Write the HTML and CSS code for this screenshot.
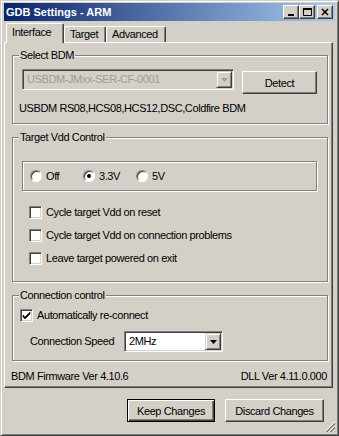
FILE: index.html
```html
<!DOCTYPE html>
<html lang="en">
<head>
    <meta charset="UTF-8">
    <title>GDB Settings - ARM</title>
    <link rel="stylesheet" href="styles.css">
</head>
<body>

    <div class="window">
        <!-- Title bar -->
        <div class="titlebar">
            <span class="title">GDB Settings - ARM</span>
            <div class="caption-buttons">
                <span class="cap-btn">
                    <svg width="14" height="12" viewBox="0 0 14 12"><rect x="4" y="8" width="6" height="2" fill="#000"/></svg>
                </span>
                <span class="cap-btn">
                    <svg width="14" height="12" viewBox="0 0 14 12"><path d="M3.5 2.5h8v7h-8z" fill="none" stroke="#000"/><rect x="3" y="2" width="9" height="2" fill="#000"/></svg>
                </span>
                <span class="cap-btn close">
                    <svg width="14" height="12" viewBox="0 0 14 12"><path d="M4 3l6 6M10 3l-6 6" stroke="#000" stroke-width="1.6"/></svg>
                </span>
            </div>
        </div>

        <!-- Tabs -->
        <div class="tabs">
            <span class="tab active tab-interface">Interface</span>
            <span class="tab tab-target">Target</span>
            <span class="tab tab-advanced">Advanced</span>
        </div>

        <div class="panel">
            <!-- Select BDM -->
            <fieldset class="group">
                <legend>Select BDM</legend>
                <div class="bdm-row">
                    <div class="combo disabled bdm-combo">
                        <span class="combo-text">USBDM-JMxx-SER-CF-0001</span>
                        <span class="combo-arrow">
                            <svg width="7" height="4" viewBox="0 0 7 4"><path d="M0 0h7L3.5 4z" fill="#a0a0a0"/></svg>
                        </span>
                    </div>
                    <button class="btn detect">Detect</button>
                </div>
                <p class="info">USBDM RS08,HCS08,HCS12,DSC,Coldfire BDM</p>
            </fieldset>

            <!-- Target Vdd -->
            <fieldset class="group">
                <legend>Target Vdd Control</legend>
                <div class="radio-box">
                    <label class="radio"><span class="radio-dot"></span>Off</label>
                    <label class="radio"><span class="radio-dot checked"></span>3.3V</label>
                    <label class="radio"><span class="radio-dot"></span>5V</label>
                </div>
                <div class="check-list">
                    <label class="check"><span class="check-box"></span>Cycle target Vdd on reset</label>
                    <label class="check"><span class="check-box"></span>Cycle target Vdd on connection problems</label>
                    <label class="check"><span class="check-box"></span>Leave target powered on exit</label>
                </div>
            </fieldset>

            <!-- Connection control -->
            <fieldset class="group">
                <legend>Connection control</legend>
                <label class="check auto">
                    <span class="check-box">
                        <svg width="9" height="9" viewBox="0 0 9 9"><path d="M1 4l2 2 5-5v2l-5 5-2-2z" fill="#000" stroke="#000" stroke-width="0.6"/></svg>
                    </span>
                    Automatically re-connect
                </label>
                <div class="speed-row">
                    <span class="speed-label">Connection Speed</span>
                    <div class="combo speed-combo">
                        <span class="combo-text">2MHz</span>
                        <span class="combo-arrow">
                            <svg width="7" height="4" viewBox="0 0 7 4"><path d="M0 0h7L3.5 4z" fill="#000"/></svg>
                        </span>
                    </div>
                </div>
            </fieldset>

            <div class="versions">
                <span>BDM Firmware Ver 4.10.6</span>
                <span>DLL Ver 4.11.0.000</span>
            </div>
        </div>

        <!-- Dialog buttons -->
        <div class="actions">
            <button class="btn default keep">Keep Changes</button>
            <button class="btn discard">Discard Changes</button>
        </div>

        <svg class="grip" width="12" height="12" viewBox="0 0 12 12">
            <path d="M11 1L1 11M11 5L5 11M11 9L9 11" stroke="#fff" stroke-width="1"/>
            <path d="M11 2L2 11M11 3L3 11M11 6L6 11M11 7L7 11M11 10L10 11" stroke="#808080" stroke-width="1"/>
        </svg>
    </div>

</body>
</html>
```

FILE: styles.css
```css
body {
    margin: 0;
    padding: 0;
    background-color: #d4d0c8;
    font-family: "Liberation Sans", Arial, sans-serif;
    font-size: 11px;
    line-height: 13px;
    letter-spacing: -0.4px;
    color: #000;
}

.window {
    position: relative;
    width: 339px;
    height: 436px;
    box-sizing: border-box;
    padding: 2px 3px 3px 3px;
    background-color: #d4d0c8;
    border: 1px solid;
    border-color: #d4d0c8 #404040 #404040 #d4d0c8;
    box-shadow: inset 1px 1px #fff, inset -1px -1px #808080;
}

/* Title bar */
.titlebar {
    height: 18px;
    display: flex;
    align-items: center;
    justify-content: space-between;
    padding-left: 2px;
    background: linear-gradient(to right, #0a246a, #a6caf0);
    color: #fff;
}

.title {
    font-weight: bold;
    font-size: 11px;
    letter-spacing: 0;
}

.caption-buttons {
    display: flex;
    padding-right: 2px;
}

.cap-btn {
    width: 16px;
    height: 14px;
    box-sizing: border-box;
    display: flex;
    align-items: center;
    justify-content: center;
    background-color: #d4d0c8;
    border: 1px solid;
    border-color: #fff #404040 #404040 #fff;
    box-shadow: inset -1px -1px #808080;
}

.cap-btn.close {
    margin-left: 2px;
}

/* Tabs */
.tabs {
    display: flex;
    align-items: flex-end;
    height: 21px;
    padding-left: 2px;
    position: relative;
    z-index: 1;
}

.tab {
    height: 16px;
    box-sizing: border-box;
    padding: 1px 0 0 5px;
    border: 1px solid;
    border-bottom: none;
    border-color: #fff #404040 #404040 #fff;
    box-shadow: inset -1px 0 #808080;
    border-radius: 2px 2px 0 0;
    background-color: #d4d0c8;
}

.tab.active {
    height: 20px;
    margin-bottom: -1px;
    padding: 2px 0 0 5px;
}

.tab-interface {
    width: 58px;
}

.tab-target {
    width: 42px;
}

.tab-advanced {
    width: 60px;
}

/* Tab panel */
.panel {
    height: 346px;
    box-sizing: border-box;
    margin-right: 2px;
    padding: 6px 0 0 0;
    border: 1px solid;
    border-color: #fff #404040 #404040 #fff;
    box-shadow: inset -1px -1px #808080;
}

/* Group boxes */
.group {
    width: 316px;
    box-sizing: border-box;
    margin: 0 4px 0 7px;
    padding: 7px 6px 8px 6px;
    min-width: 0;
    border: 1px solid #808080;
    box-shadow: inset 1px 1px #fff, 1px 1px #fff;
}

.group + .group {
    margin-top: 7px;
}

.group legend {
    padding: 0 1px;
    margin-left: 0;
    background-color: #d4d0c8;
}

.bdm-row {
    display: flex;
    align-items: flex-start;
    margin-left: 3px;
}

/* Combo boxes */
.combo {
    height: 21px;
    box-sizing: border-box;
    display: flex;
    align-items: center;
    background-color: #fff;
    border: 1px solid;
    border-color: #808080 #fff #fff #808080;
    box-shadow: inset 1px 1px #404040, inset -1px -1px #d4d0c8;
    padding: 2px;
}

.combo.disabled {
    background-color: #d4d0c8;
    color: #a09c94;
}

.combo-text {
    flex: 1;
    padding-left: 2px;
}

.combo-arrow {
    width: 16px;
    height: 17px;
    box-sizing: border-box;
    display: flex;
    align-items: center;
    justify-content: center;
    background-color: #d4d0c8;
    border: 1px solid;
    border-color: #d4d0c8 #404040 #404040 #d4d0c8;
    box-shadow: inset 1px 1px #fff, inset -1px -1px #808080;
    margin-right: -1px;
}

.bdm-combo {
    width: 212px;
}

.speed-combo {
    width: 99px;
}

/* Buttons */
.btn {
    height: 23px;
    box-sizing: border-box;
    padding: 0;
    font-family: inherit;
    font-size: 11px;
    letter-spacing: inherit;
    color: #000;
    background-color: #d4d0c8;
    border: 1px solid;
    border-color: #fff #404040 #404040 #fff;
    box-shadow: inset -1px -1px #808080;
}

.btn.default {
    border: 1px solid #000;
    box-shadow: inset 1px 1px #fff, inset -1px -1px #404040, inset -2px -2px #808080;
}

.detect {
    width: 75px;
    margin-top: 2px;
    margin-left: 8px;
}

.info {
    margin: 8px 0 0 0;
}

/* Radio group */
.radio-box {
    height: 30px;
    width: 295px;
    box-sizing: border-box;
    margin: 10px 0 0 3px;
    padding-left: 7px;
    display: flex;
    align-items: center;
    border: 1px solid #808080;
    box-shadow: inset 1px 1px #fff, 1px 1px #fff;
}

.radio {
    width: 53px;
    display: flex;
    align-items: center;
    gap: 4px;
}

.radio-dot {
    width: 12px;
    height: 12px;
    box-sizing: border-box;
    border-radius: 50%;
    background-color: #fff;
    border: 1px solid;
    border-color: #808080 #fff #fff #808080;
    box-shadow: inset 1px 1px #404040;
    position: relative;
}

.radio-dot.checked::after {
    content: "";
    position: absolute;
    left: 3px;
    top: 3px;
    width: 4px;
    height: 4px;
    border-radius: 50%;
    background-color: #000;
}

/* Checkboxes */
.check-list {
    display: flex;
    flex-direction: column;
    gap: 10px;
    margin: 15px 0 8px 10px;
}

.check {
    display: flex;
    align-items: center;
    gap: 4px;
    height: 13px;
}

.check-box {
    width: 13px;
    height: 13px;
    box-sizing: border-box;
    display: flex;
    align-items: center;
    justify-content: center;
    background-color: #fff;
    border: 1px solid;
    border-color: #808080 #fff #fff #808080;
    box-shadow: inset 1px 1px #404040, inset -1px -1px #d4d0c8;
}

.check.auto {
    margin-left: 1px;
}

.speed-row {
    display: flex;
    align-items: center;
    margin: 9px 0 0 11px;
}

.speed-label {
    width: 94px;
}

/* Versions line */
.versions {
    display: flex;
    justify-content: space-between;
    margin: 9px 5px 0 6px;
}

/* Dialog buttons */
.actions {
    display: flex;
    justify-content: flex-end;
    gap: 10px;
    margin: 11px 11px 0 0;
}

.keep {
    width: 88px;
}

.discard {
    width: 99px;
}

.grip {
    position: absolute;
    right: 2px;
    bottom: 2px;
}
```
